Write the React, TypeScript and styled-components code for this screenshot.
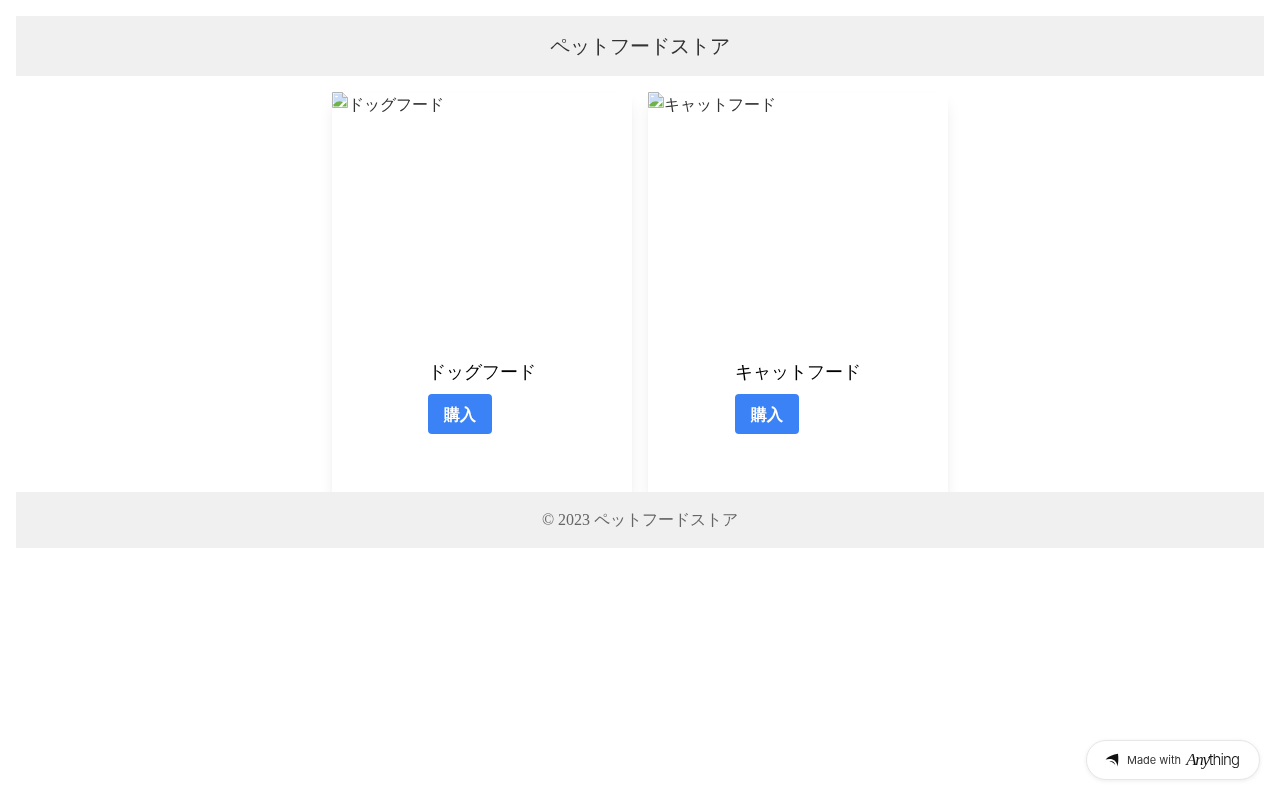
import React from 'react';
import styled, { createGlobalStyle } from 'styled-components';

const GlobalStyle = createGlobalStyle`
  html, body {
    margin: 0;
    padding: 0;
    background: #fff;
    color: #333;
    font-family: 'Liberation Serif', serif;
    font-size: 16px;
  }
`;

const products = [
  { name: 'ドッグフード' },
  { name: 'キャットフード' },
];

const BrokenImageIcon = () => (
  <IconSvg viewBox="0 0 16 16" width="16" height="16">
    <path d="M0.5 0.5H10.5L15.5 5.5V15.5H0.5Z" fill="#fff" stroke="#b4b4b4" />
    <path d="M10.5 0.5V5.5H15.5" fill="#ececec" stroke="#b4b4b4" />
    <path d="M1.5 1.5H10V6H14.5V9.5L8 9.5L1.5 11Z" fill="#c9dcf8" />
    <path d="M3 4.5C3 3.5 5.5 3.5 6 4.5C6 5.5 3 5.5 3 4.5Z" fill="#fff" />
    <path d="M1.5 14.5V12.5C4 9.5 8 8.5 11 10L7 14.5Z" fill="#6fb24a" />
    <path d="M10 14.5L14.5 10V14.5Z" fill="#6fb24a" />
  </IconSvg>
);

const ProductCard = ({ name }: { name: string }) => (
  <Card>
    <ImageSlot>
      <BrokenImageIcon />
      {name}
    </ImageSlot>
    <CardBody>
      <ProductName>{name}</ProductName>
      <BuyButton>購入</BuyButton>
    </CardBody>
  </Card>
);

const App = () => (
  <>
    <GlobalStyle />
    <Page>
      <Header>ペットフードストア</Header>
      <Main>
        {products.map((p) => (
          <ProductCard key={p.name} name={p.name} />
        ))}
      </Main>
      <Footer>© 2023 ペットフードストア</Footer>
    </Page>
    <Badge>
      <svg viewBox="0 0 14 14" width="14" height="14">
        <path d="M0.5 6.5C3.5 3.5 8 1.2 13 0.8C13.6 5 13.4 9.5 12.6 13.5C12.2 10 10.6 7.6 7.6 6.4C5.6 5.8 3 5.8 0.5 6.5Z" fill="#111" />
        <path d="M4.5 8.2C7 7.6 9.6 9 10.4 12.2C9.2 10.2 7 8.8 4.5 8.2Z" fill="#111" />
      </svg>
      <MadeWith>Made with</MadeWith>
      <BrandName>
        <BrandAny>Any</BrandAny>thing
      </BrandName>
    </Badge>
  </>
);

const Page = styled.div`
  padding: 16px;
  will-change: transform;
`;

const Header = styled.header`
  height: 60px;
  display: flex;
  align-items: center;
  justify-content: center;
  background: #f0f0f0;
  font-size: 20px;
`;

const Main = styled.main`
  height: 400px;
  padding-top: 16px;
  display: flex;
  justify-content: center;
  align-items: flex-start;
  gap: 16px;
`;

const Card = styled.article`
  width: 300px;
  height: 400px;
  background: #fff;
  box-shadow: 0 10px 15px -3px rgba(0, 0, 0, 0.1), 0 4px 6px -2px rgba(0, 0, 0, 0.05);
  display: flex;
  flex-direction: column;
  align-items: center;
`;

const ImageSlot = styled.div`
  width: 100%;
  height: 250px;
  line-height: 26px;
`;

const IconSvg = styled.svg`
  vertical-align: top;
`;

const CardBody = styled.div`
  padding-top: 16px;
`;

const ProductName = styled.h2`
  margin: 0 0 8px;
  font-size: 18px;
  font-weight: 400;
  line-height: 28px;
  color: #000;
`;

const BuyButton = styled.button`
  display: block;
  width: 64px;
  height: 40px;
  padding: 2px 0 0;
  border: 0;
  border-radius: 4px;
  background: #3b82f6;
  color: #fff;
  font-family: 'Liberation Serif', serif;
  font-size: 16px;
  font-weight: 700;
`;

const Footer = styled.footer`
  position: relative;
  height: 56px;
  display: flex;
  align-items: center;
  justify-content: center;
  background: #f0f0f0;
  color: #666;
`;

const Badge = styled.div`
  position: fixed;
  right: 20px;
  bottom: 20px;
  width: 174px;
  height: 40px;
  box-sizing: border-box;
  padding-left: 18px;
  display: flex;
  align-items: center;
  border: 1px solid #e6e6e6;
  border-radius: 20px;
  background: #fff;
  box-shadow: 0 1px 4px rgba(0, 0, 0, 0.08);
  will-change: transform;
`;

const MadeWith = styled.span`
  margin-left: 8px;
  font-family: 'Inter', sans-serif;
  font-size: 11px;
  color: #333;
`;

const BrandName = styled.span`
  margin-left: 5px;
  font-family: 'Inter', sans-serif;
  font-size: 15px;
  font-weight: 300;
  letter-spacing: -0.9px;
  color: #111;
`;

const BrandAny = styled.span`
  font-family: 'Liberation Serif', serif;
  font-style: italic;
  font-size: 17px;
  letter-spacing: -1.2px;
`;

export default App;
